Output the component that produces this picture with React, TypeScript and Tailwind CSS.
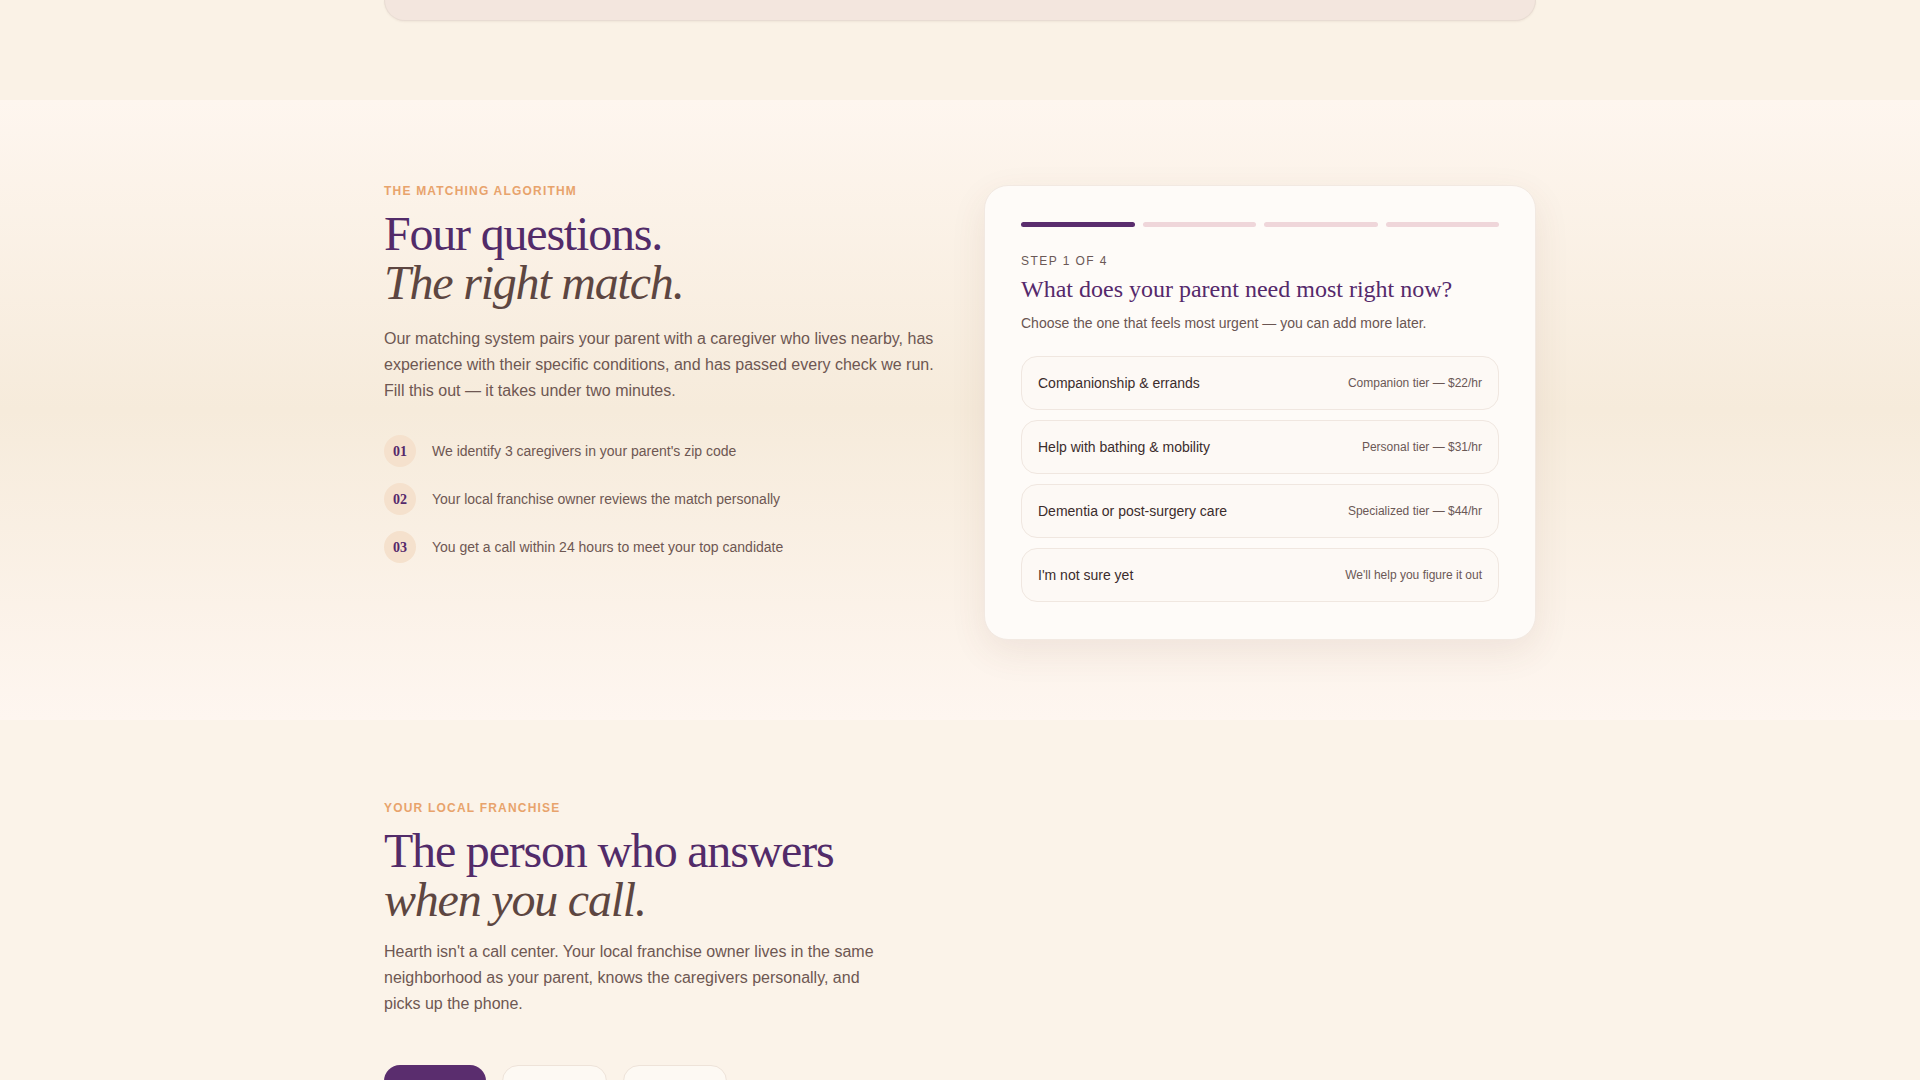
import React from 'react';

const SERIF = 'font-["Liberation_Serif","Times_New_Roman",serif]';

const STEPS = [
  { n: '01', text: "We identify 3 caregivers in your parent's zip code" },
  { n: '02', text: 'Your local franchise owner reviews the match personally' },
  { n: '03', text: 'You get a call within 24 hours to meet your top candidate' },
];

const OPTIONS = [
  { label: 'Companionship & errands', note: 'Companion tier — $22/hr' },
  { label: 'Help with bathing & mobility', note: 'Personal tier — $31/hr' },
  { label: 'Dementia or post-surgery care', note: 'Specialized tier — $44/hr' },
  { label: "I'm not sure yet", note: "We'll help you figure it out" },
];

const OFFICES = [
  { name: 'Hartford', w: 'w-[102px]' },
  { name: 'New Haven', w: 'w-[105px]' },
  { name: 'Stamford', w: 'w-[104px]' },
];

function Eyebrow({ children }: { children: React.ReactNode }) {
  return (
    <div className="text-[12px] leading-4 font-bold tracking-[0.1em] uppercase text-[#e8a36c]">
      {children}
    </div>
  );
}

function MatchCard() {
  return (
    <div className="mt-[2px] rounded-[24px] bg-[#fefbf8] border border-[#f2e9e2] px-9 pt-9 pb-[37px] shadow-[0_12px_36px_rgba(110,70,60,0.09)]">
      {/* progress — step 1 of 4 */}
      <div className="flex gap-2">
        <div className="h-[5px] flex-1 rounded-full bg-[#5a2d6e]" />
        <div className="h-[5px] flex-1 rounded-full bg-[#efd6da]" />
        <div className="h-[5px] flex-1 rounded-full bg-[#efd6da]" />
        <div className="h-[5px] flex-1 rounded-full bg-[#efd6da]" />
      </div>

      <div className="mt-[26px] text-[12px] leading-4 tracking-[0.12em] text-[#6a5856]">STEP 1 OF 4</div>
      <h3 className={`${SERIF} mt-1 text-[24px] leading-8 text-[#55296b]`}>
        What does your parent need most right now?
      </h3>
      <p className="mt-2 text-[14px] leading-5 text-[#6a5552]">
        Choose the one that feels most urgent — you can add more later.
      </p>

      <div className="mt-[23px] flex flex-col gap-[10px]">
        {OPTIONS.map(o => (
          <button
            key={o.label}
            className="h-[54px] flex items-center justify-between px-4 rounded-2xl border border-[#f0e7e0] bg-[#fdf9f5] text-left"
          >
            <span className="text-[14px] text-[#3b2c2c]">{o.label}</span>
            <span className="text-[12px] text-[#6b5855]">{o.note}</span>
          </button>
        ))}
      </div>
    </div>
  );
}

export default function App() {
  return (
    <div className='min-h-screen font-["Liberation_Sans",Arial,sans-serif] text-[#6e5752]'>
      {/* tail of the previous section */}
      <section className="bg-[#faf2e6] pb-[79px]">
        <div className="max-w-6xl mx-auto">
          <div className="h-[21px] rounded-b-[22px] border-x border-b border-[#e8dcd3] bg-[#f3e6de] shadow-[0_1px_2px_rgba(120,90,70,0.08)]" />
        </div>
      </section>

      {/* matching algorithm */}
      <section className="bg-gradient-to-b from-[#fef6ef] via-[#f6ebdb] to-[#fef6f0] pt-[83px] pb-20">
        <div className="max-w-6xl mx-auto grid grid-cols-2 gap-12 items-start">
          <div>
            <Eyebrow>The matching algorithm</Eyebrow>
            <h2 className={`${SERIF} mt-[10px] text-[48px] leading-[49px] tracking-[-0.025em]`}>
              <span className="block text-[#522b69]">Four questions.</span>
              <span className="block italic text-[#5d4641]">The right match.</span>
            </h2>
            <p className="mt-[19px] text-[16px] leading-[26px] text-[#6e5752]">
              Our matching system pairs your parent with a caregiver who lives nearby, has experience with
              their specific conditions, and has passed every check we run. Fill this out — it takes under
              two minutes.
            </p>
            <ul className="mt-[31px] flex flex-col gap-4">
              {STEPS.map(s => (
                <li key={s.n} className="flex items-center gap-4">
                  <span
                    className={`${SERIF} w-8 h-8 shrink-0 rounded-full bg-[#f5e1cd] flex items-center justify-center text-[14px] font-bold text-[#55296b]`}
                  >
                    {s.n}
                  </span>
                  <span className="text-[14px] text-[#6e5752]">{s.text}</span>
                </li>
              ))}
            </ul>
          </div>

          <MatchCard />
        </div>
      </section>

      {/* local franchise */}
      <section className="bg-[#fbf3e9] pt-20 pb-24">
        <div className="max-w-6xl mx-auto grid grid-cols-2 gap-12">
          <div>
            <Eyebrow>Your local franchise</Eyebrow>
            <h2 className={`${SERIF} mt-[10px] text-[48px] leading-[49px] tracking-[-0.025em]`}>
              <span className="block text-[#522b69]">The person who answers</span>
              <span className="block italic text-[#5d4641]">when you call.</span>
            </h2>
            <p className="mt-[15px] max-w-lg text-[16px] leading-[26px] text-[#6e5752]">
              Hearth isn't a call center. Your local franchise owner lives in the same neighborhood as your
              parent, knows the caregivers personally, and picks up the phone.
            </p>
            <div className="mt-12 flex gap-4">
              {OFFICES.map((o, i) => (
                <button
                  key={o.name}
                  className={
                    i === 0
                      ? `${o.w} py-3 rounded-2xl bg-[#5a2d6e] text-white text-[14px] font-semibold`
                      : `${o.w} py-3 rounded-2xl bg-[#fdf9f3] border border-[#eee3d9] text-[#5d4641] text-[14px] font-semibold`
                  }
                >
                  {o.name}
                </button>
              ))}
            </div>
          </div>
          <div />
        </div>
      </section>
    </div>
  );
}
